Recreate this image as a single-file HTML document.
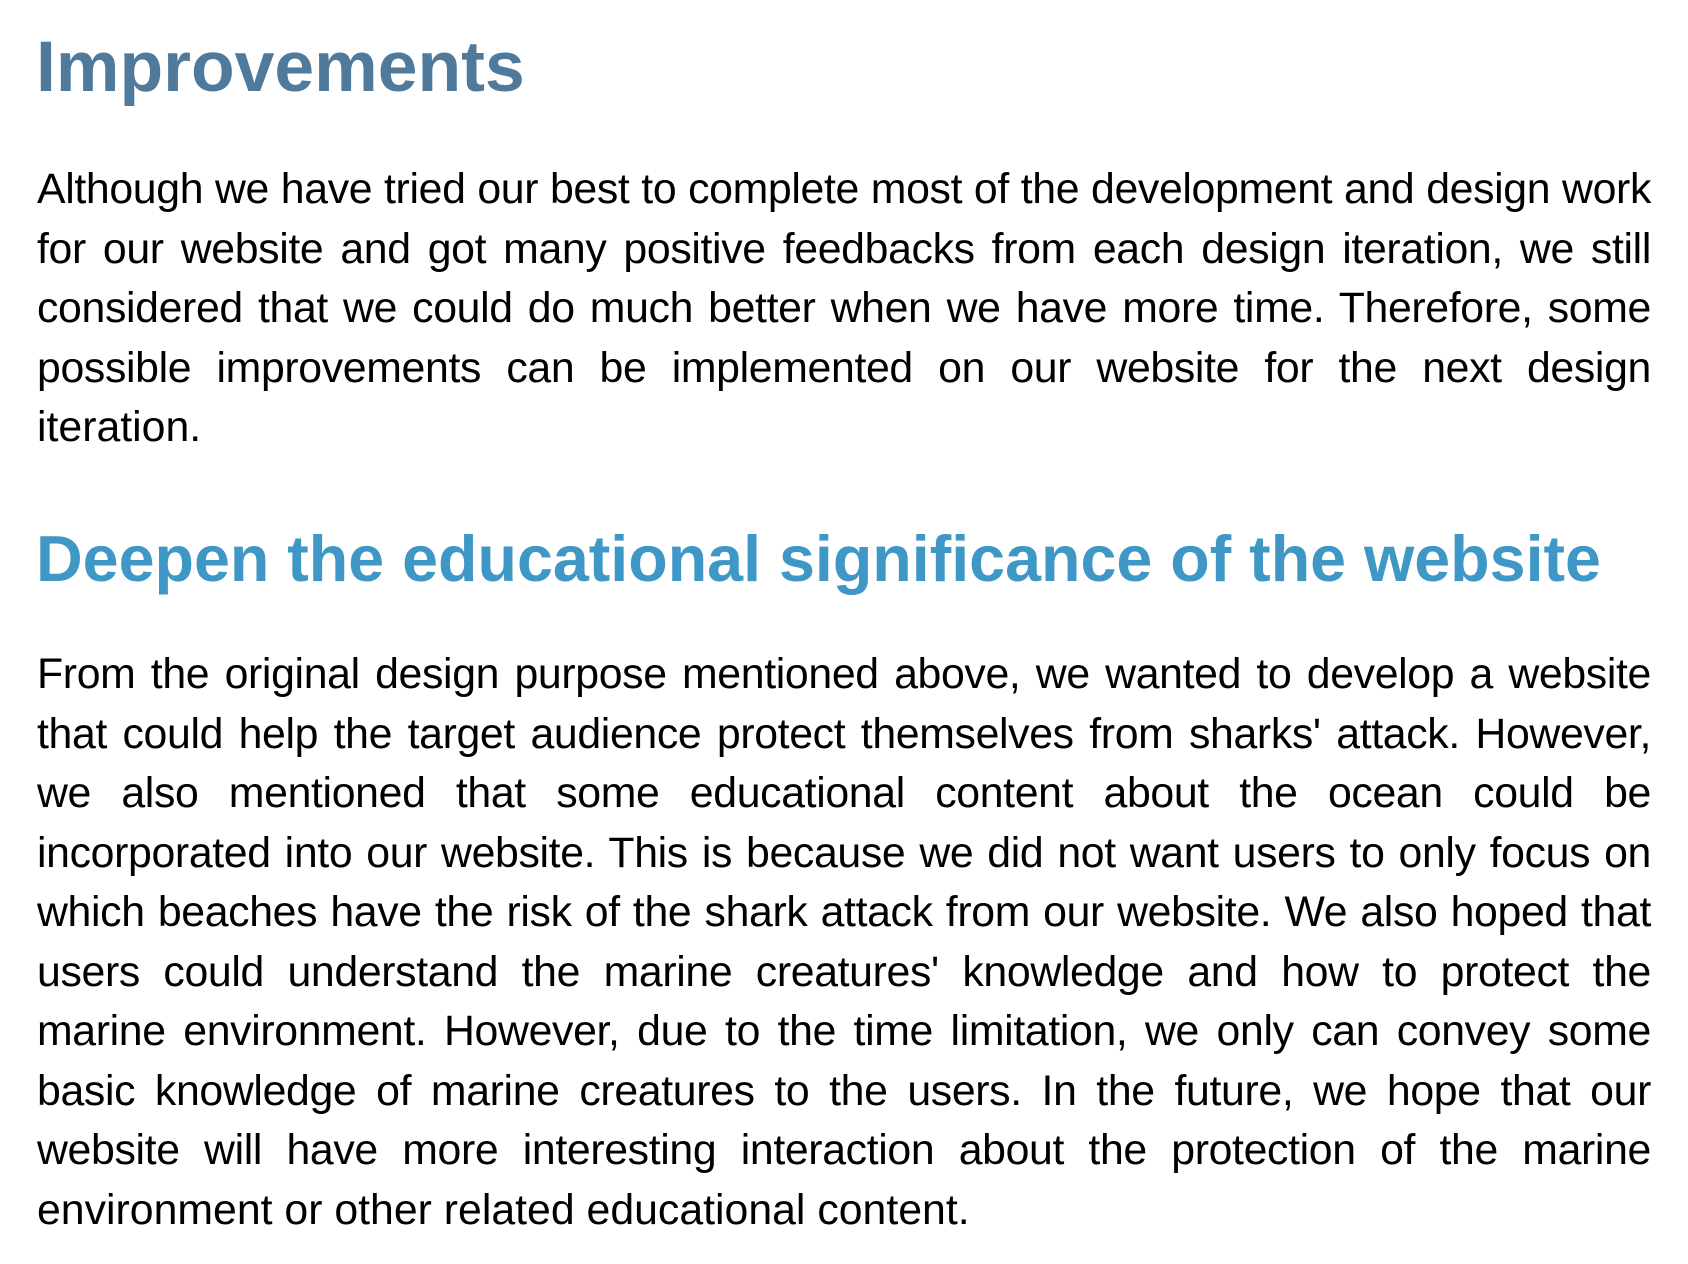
<!DOCTYPE html>
<html><head><meta charset="utf-8"><style>
body{margin:0;width:1688px;height:1264px;background:#fff;position:relative;overflow:hidden;font-family:"Liberation Sans",Arial,sans-serif}
.h{position:absolute;left:36px;margin:0;font-weight:bold;line-height:1;white-space:nowrap}
#h1{top:32px;font-size:71.5px;color:#4f7a9c}
#h2{top:527px;font-size:64.6px;color:#3e97c5}
.p{position:absolute;left:37px;width:1614px;margin:0;font-size:42.8px;line-height:59.5px;color:#000;letter-spacing:-0.35px}
.p div{text-align:justify;text-align-last:justify;white-space:nowrap}
.p div.l{text-align-last:left;letter-spacing:0}
#p1{top:160px}
#p2{top:645px}
</style></head><body>
<h1 class="h" id="h1">Improvements</h1>
<div class="p" id="p1">
<div>Although we have tried our best to complete most of the development and design work</div>
<div>for our website and got many positive feedbacks from each design iteration, we still</div>
<div>considered that we could do much better when we have more time. Therefore, some</div>
<div>possible improvements can be implemented on our website for the next design</div>
<div class="l">iteration.</div>
</div>
<h2 class="h" id="h2">Deepen the educational significance of the website</h2>
<div class="p" id="p2">
<div>From the original design purpose mentioned above, we wanted to develop a website</div>
<div>that could help the target audience protect themselves from sharks' attack. However,</div>
<div>we also mentioned that some educational content about the ocean could be</div>
<div>incorporated into our website. This is because we did not want users to only focus on</div>
<div>which beaches have the risk of the shark attack from our website. We also hoped that</div>
<div>users could understand the marine creatures' knowledge and how to protect the</div>
<div>marine environment. However, due to the time limitation, we only can convey some</div>
<div>basic knowledge of marine creatures to the users. In the future, we hope that our</div>
<div>website will have more interesting interaction about the protection of the marine</div>
<div class="l">environment or other related educational content.</div>
</div>
</body></html>
